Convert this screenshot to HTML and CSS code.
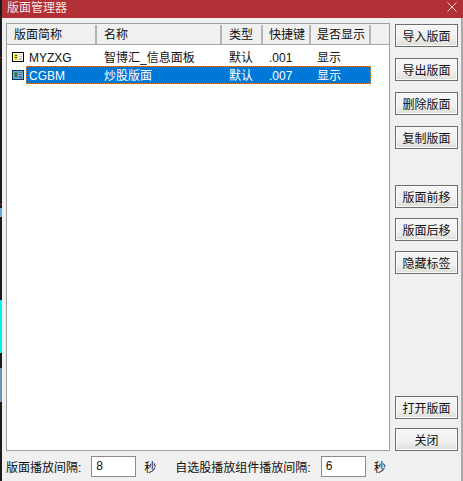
FILE: index.html
```html
<!DOCTYPE html>
<html lang="zh-CN">
<head>
  <meta charset="UTF-8">
  <title>版面管理器</title>
  <link rel="stylesheet" href="styles.css">
</head>
<body>
<div class="desk-strip">
  <span class="blip blip-red"></span>
  <span class="blip blip-red2"></span>
  <span class="blip blip-blue"></span>
  <span class="blip blip-cyan"></span>
  <span class="blip blip-blue2"></span>
</div>
<div class="dialog">
  <header class="titlebar">
    <span class="title">版面管理器</span>
    <svg class="close-x" width="10" height="10" viewBox="0 0 10 10"><path d="M0.5 0.5L9.5 9.5M9.5 0.5L0.5 9.5" stroke="#efd4d4" stroke-width="1" fill="none"/></svg>
  </header>
  <div class="body">
    <div class="top">
      <div class="list">
        <div class="list-head">
          <div class="th c-short">版面简称</div>
          <div class="th c-name">名称</div>
          <div class="th c-type">类型</div>
          <div class="th c-key">快捷键</div>
          <div class="th c-show">是否显示</div>
        </div>
        <div class="row">
          <svg class="ico" width="12" height="10" viewBox="0 0 12 10"><rect width="12" height="10" fill="#000"/><rect x="1" y="1" width="10" height="8" fill="#fdfdf0"/><rect x="2" y="2" width="4" height="6" fill="#e4e420"/><rect x="3" y="3" width="2" height="1" fill="#444"/><rect x="3" y="5" width="2" height="1" fill="#444"/><rect x="7" y="2" width="3" height="1" fill="#e8e8a0"/><rect x="7" y="4" width="3" height="1" fill="#bbb"/><rect x="7" y="6" width="3" height="2" fill="#bbb"/></svg>
          <div class="cells">
            <div class="td c-short">MYZXG</div>
            <div class="td c-name">智博汇_信息面板</div>
            <div class="td c-type">默认</div>
            <div class="td c-key">.001</div>
            <div class="td c-show">显示</div>
          </div>
        </div>
        <div class="row selected">
          <svg class="ico" width="12" height="10" viewBox="0 0 12 10"><rect width="12" height="10" fill="#0a2f66"/><rect x="1" y="1" width="10" height="8" fill="#78add0"/><rect x="2" y="2" width="4" height="6" fill="#4f9a70"/><rect x="3" y="3" width="2" height="1" fill="#1c4460"/><rect x="3" y="5" width="2" height="1" fill="#1c4460"/><rect x="7" y="2" width="3" height="1" fill="#4f9a90"/><rect x="7" y="4" width="3" height="1" fill="#4a7a9a"/><rect x="7" y="6" width="3" height="2" fill="#4a7a9a"/></svg>
          <div class="cells">
            <div class="td c-short">CGBM</div>
            <div class="td c-name">炒股版面</div>
            <div class="td c-type">默认</div>
            <div class="td c-key">.007</div>
            <div class="td c-show">显示</div>
          </div>
        </div>
      </div>
      <div class="actions">
        <div class="btn-group">
          <button class="btn">导入版面</button>
          <button class="btn">导出版面</button>
          <button class="btn">删除版面</button>
          <button class="btn">复制版面</button>
        </div>
        <div class="btn-group group-move">
          <button class="btn">版面前移</button>
          <button class="btn">版面后移</button>
          <button class="btn">隐藏标签</button>
        </div>
        <div class="btn-group group-bottom">
          <button class="btn">打开版面</button>
          <button class="btn">关闭</button>
        </div>
      </div>
    </div>
    <div class="footer">
      <span>版面播放间隔:</span>
      <div class="field">8</div>
      <span class="unit">秒</span>
      <span class="label-2">自选股播放组件播放间隔:</span>
      <div class="field field-2">6</div>
      <span class="unit">秒</span>
    </div>
  </div>
</div>
</body>
</html>
```

FILE: styles.css
```css
html, body {
  height: 100%;
  margin: 0;
  padding: 0;
  overflow: hidden;
}
body {
  display: flex;
  font-family: "Liberation Sans", "Noto Sans CJK SC", sans-serif;
  font-size: 12px;
  color: #111;
  background: #f0f0f0;
}
.desk-strip {
  width: 2px;
  background: #1c1c1c;
  position: relative;
  flex-shrink: 0;
}
.blip {
  position: absolute;
  left: 0;
  width: 2px;
}
.blip-red { top: 57px; height: 1px; background: #a02020; }
.blip-red2 { top: 204px; height: 1px; background: #a02020; }
.blip-blue { top: 208px; height: 9px; background: #6aa8e0; }
.blip-cyan { top: 300px; height: 53px; background: #00f0f8; }
.blip-blue2 { top: 368px; height: 34px; background: #6c90b8; }
.dialog {
  flex: 1;
  display: flex;
  flex-direction: column;
  min-width: 0;
}
.titlebar {
  height: 18px;
  background: #b03035;
  color: #f4e4e4;
  display: flex;
  justify-content: space-between;
  padding: 1px 6px 0 5px;
  box-sizing: border-box;
  font-size: 12px;
  line-height: 14px;
}
.close-x { margin-top: 1px; }
.body {
  flex: 1;
  display: flex;
  flex-direction: column;
  padding: 5px 3px 0 4px;
  border-right: 2px solid #a8a8a8;
}
.top {
  height: 428px;
  display: flex;
  gap: 5px;
}
.list {
  width: 384px;
  height: 428px;
  box-sizing: border-box;
  background: #fff;
  border: 1px solid #a0a0a0;
}
.list-head {
  display: flex;
  height: 21px;
  background: #f0f0f0;
  padding-top: 1px;
  box-sizing: border-box;
  border-bottom: 1px solid #a8a8a8;
}
.th {
  box-sizing: border-box;
  height: 19px;
  line-height: 21px;
  padding-left: 7px;
  border-right: 2px solid #b4b4b4;
}
.c-short { width: 90px; flex-shrink: 0; }
.c-name { width: 125px; flex-shrink: 0; }
.c-type { width: 41px; flex-shrink: 0; }
.c-key { width: 48px; flex-shrink: 0; }
.c-show { width: 60px; flex-shrink: 0; }
.th.c-key, .th.c-show { padding-left: 6px; }
.row {
  display: flex;
  align-items: center;
  height: 18px;
  padding-left: 5px;
}
.list-head + .row { margin-top: 3px; }
.ico { flex-shrink: 0; }
.cells {
  display: flex;
  height: 18px;
  line-height: 20px;
  margin-left: 2px;
}
.td { padding-left: 7px; box-sizing: border-box; }
.td.c-short { width: 71px; padding-left: 3px; }
.td.c-key, .td.c-show { padding-left: 6px; }
.selected .cells {
  background: #0078d7;
  color: #fff;
  outline: 1px dotted #f08020;
  outline-offset: -1px;
}
.actions {
  flex: 1;
  display: flex;
  flex-direction: column;
  padding-top: 1px;
}
.btn-group {
  display: flex;
  flex-direction: column;
  gap: 11px;
}
.group-move {
  gap: 10px;
  margin-top: 36px;
}
.group-bottom {
  margin-top: auto;
  gap: 9px;
}
.btn {
  width: 63px;
  height: 23px;
  padding: 0;
  box-sizing: border-box;
  border: 1px solid #6e6e6e;
  box-shadow: inset 0 0 0 1px #fafafa;
  background: linear-gradient(#f6f6f6 0%, #f0f0f0 60%, #dcdcd8 100%);
  font: inherit;
  color: #111;
}
.footer {
  display: flex;
  align-items: center;
  margin-top: 5px;
  height: 21px;
}
.field {
  width: 45px;
  height: 21px;
  line-height: 19px;
  box-sizing: border-box;
  border: 1px solid #8c8c8c;
  background: #fff;
  padding-left: 4px;
  margin-left: 10px;
}
.unit { margin-left: 8px; }
.label-2 { margin-left: 19px; }
.field-2 { margin-left: 10px; }
```
